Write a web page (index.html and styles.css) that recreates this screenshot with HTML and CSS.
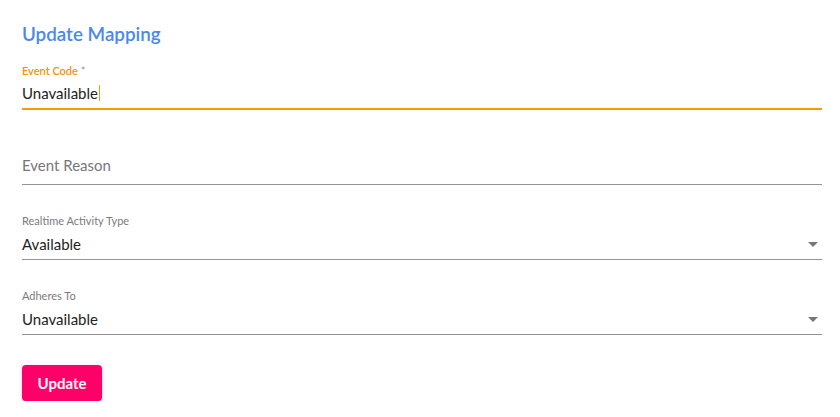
FILE: index.html
```html
<!DOCTYPE html>
<html lang="en">
<head>
<meta charset="utf-8">
<title>Update Mapping</title>
<link rel="stylesheet" href="styles.css">
</head>
<body>
<div class="dialog">
  <h2 class="title">Update Mapping</h2>
  <div class="field focused">
    <label class="label">Event Code <span class="req">*</span></label>
    <div class="input"><span class="value">Unavailable</span><span class="caret"></span></div>
  </div>
  <div class="field">
    <div class="label"></div>
    <div class="input"><span class="placeholder">Event Reason</span></div>
  </div>
  <div class="field">
    <label class="label">Realtime Activity Type</label>
    <div class="input select"><span class="value">Available</span>
      <svg class="arrow" width="10" height="5" viewBox="7 10 10 5"><path d="M7 10l5 5 5-5z"/></svg>
    </div>
  </div>
  <div class="field">
    <label class="label">Adheres To</label>
    <div class="input select"><span class="value">Unavailable</span>
      <svg class="arrow" width="10" height="5" viewBox="7 10 10 5"><path d="M7 10l5 5 5-5z"/></svg>
    </div>
  </div>
  <div class="actions">
    <button class="btn">Update</button>
  </div>
</div>
</body>
</html>
```
FILE: styles.css
```css
* { box-sizing: border-box; }
html, body { margin: 0; padding: 0; background: #fff; }
body {
  font-family: "Lato", "Noto Sans", sans-serif;
  color: rgba(0, 0, 0, 0.87);
}
.dialog {
  width: 840px;
  padding: 22px 18px 0 22px;
  display: flex;
  flex-direction: column;
}
.title {
  margin: 0;
  font-size: 18.8px;
  line-height: 24px;
  font-weight: 600;
  color: #4a88ee;
}
.field {
  display: flex;
  flex-direction: column;
  margin-top: 29px;
}
.field.focused { margin-top: 18px; }
.label {
  display: block;
  height: 14px;
  font-size: 11px;
  line-height: 14px;
  color: #7a7a7a;
}
.focused .label { color: #f59300; font-weight: 600; }
.req { color: #999; font-weight: 400; }
.input {
  margin-top: 5px;
  height: 27px;
  display: flex;
  align-items: flex-start;
  font-size: 15px;
  line-height: 20px;
  border-bottom: 1px solid #949494;
}
.focused .input { border-bottom: 2px solid #ff9800; }
.value { color: #222; }
.select .value { padding-top: 1px; }
.placeholder { color: #777; margin-top: -3px; }
.caret {
  width: 1px;
  height: 16px;
  margin-top: 2px;
  margin-left: 1px;
  background: #ff9800;
}
.select { justify-content: space-between; }
.arrow {
  fill: #777;
  margin-top: 9px;
  margin-right: 4px;
}
.actions { margin-top: 30px; }
.btn {
  width: 80px;
  height: 36px;
  border: 0;
  border-radius: 4px;
  background: #ff0068;
  color: #fff;
  font-family: inherit;
  font-size: 15px;
  font-weight: 700;
  box-shadow: 0 3px 1px -2px rgba(0,0,0,0.2), 0 2px 2px 0 rgba(0,0,0,0.14), 0 1px 5px 0 rgba(0,0,0,0.12);
  padding: 0;
}
```
